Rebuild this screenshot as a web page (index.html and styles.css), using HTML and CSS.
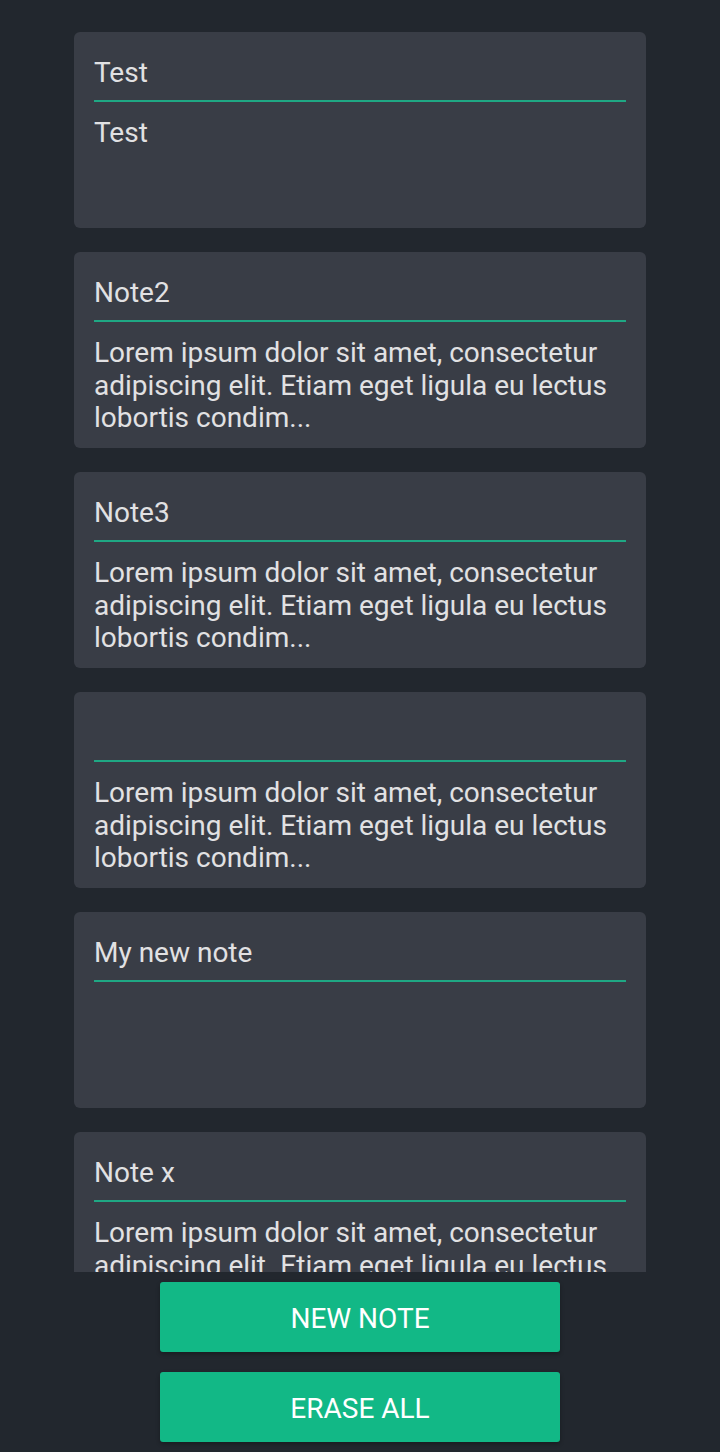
FILE: index.html
```html
<!DOCTYPE html>
<html>
<head>
<meta charset="utf-8">
<link rel="stylesheet" href="styles.css">
</head>
<body>
<div class="app">
  <div class="list">
    <div class="card">
      <div class="title">Test</div>
      <div class="body">Test</div>
    </div>
    <div class="card">
      <div class="title">Note2</div>
      <div class="body">Lorem ipsum dolor sit amet, consectetur adipiscing elit. Etiam eget ligula eu lectus lobortis condim...</div>
    </div>
    <div class="card">
      <div class="title">Note3</div>
      <div class="body">Lorem ipsum dolor sit amet, consectetur adipiscing elit. Etiam eget ligula eu lectus lobortis condim...</div>
    </div>
    <div class="card">
      <div class="title"></div>
      <div class="body">Lorem ipsum dolor sit amet, consectetur adipiscing elit. Etiam eget ligula eu lectus lobortis condim...</div>
    </div>
    <div class="card">
      <div class="title">My new note</div>
      <div class="body"></div>
    </div>
    <div class="card">
      <div class="title">Note x</div>
      <div class="body">Lorem ipsum dolor sit amet, consectetur adipiscing elit. Etiam eget ligula eu lectus lobortis condim...</div>
    </div>
  </div>
  <div class="actions">
    <button class="btn">NEW NOTE</button>
    <button class="btn">ERASE ALL</button>
  </div>
</div>
</body>
</html>
```

FILE: styles.css
```css
html, body {
  margin: 0;
  padding: 0;
  background: #22272e;
}
.app {
  height: 1452px;
  display: flex;
  flex-direction: column;
  font-family: Roboto, "Noto Sans", sans-serif;
  color: #e1e1e3;
}
.list {
  height: 1272px;
  flex: none;
  overflow: hidden;
  display: flex;
  flex-direction: column;
  align-items: center;
  gap: 24px;
  padding-top: 32px;
  box-sizing: border-box;
}
.card {
  flex: none;
  width: 572px;
  height: 196px;
  box-sizing: border-box;
  background: #393d46;
  border-radius: 6px;
  padding: 24px 20px 0;
  overflow: hidden;
}
.title {
  font-size: 28px;
  line-height: 33px;
  height: 33px;
  padding-bottom: 11px;
  border-bottom: 2px solid #1fa884;
}
.body {
  font-size: 28px;
  line-height: 32.5px;
  margin-top: 15px;
}
.actions {
  flex: 1;
  display: flex;
  flex-direction: column;
  align-items: center;
  gap: 20px;
  padding-top: 10px;
}
.btn {
  width: 400px;
  height: 70px;
  border: none;
  border-radius: 3px;
  background: #12b886;
  color: #ffffff;
  font-family: Roboto, "Noto Sans", sans-serif;
  font-size: 28px;
  box-shadow: 0 2px 4px rgba(0,0,0,0.3);
  padding: 2px 0 0;
}
```
